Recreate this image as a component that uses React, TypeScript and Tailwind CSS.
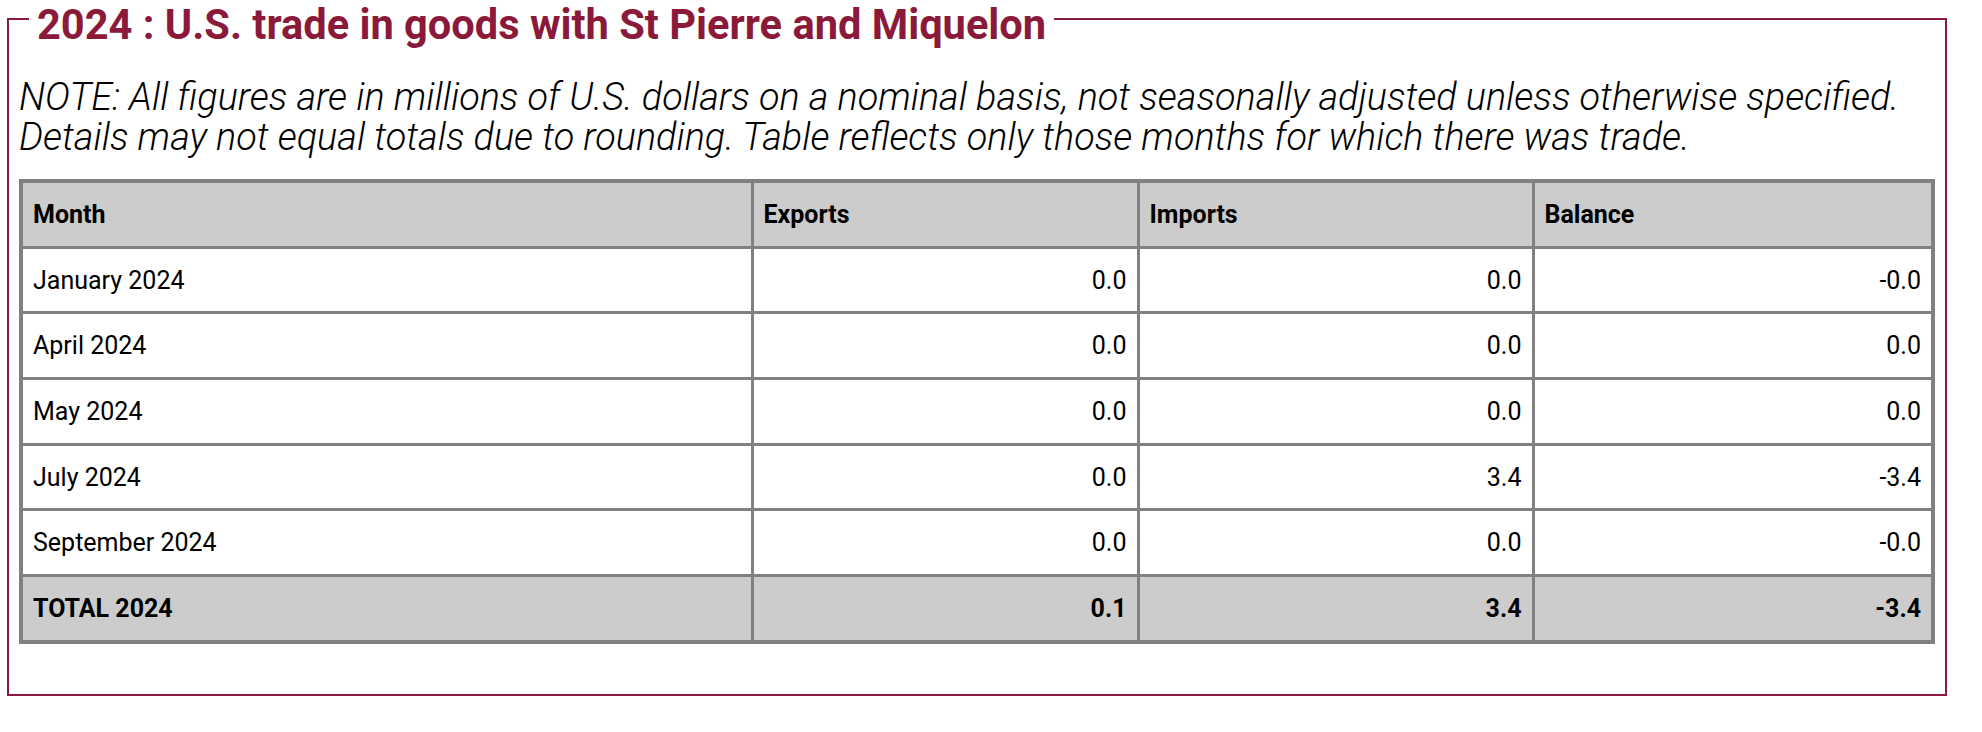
const rows = [
  { month: 'January 2024', exports: '0.0', imports: '0.0', balance: '-0.0' },
  { month: 'April 2024', exports: '0.0', imports: '0.0', balance: '0.0' },
  { month: 'May 2024', exports: '0.0', imports: '0.0', balance: '0.0' },
  { month: 'July 2024', exports: '0.0', imports: '3.4', balance: '-3.4' },
  { month: 'September 2024', exports: '0.0', imports: '0.0', balance: '-0.0' },
]

const cell = 'border-[3px] border-[#808080] px-[10px] py-[16.85px] leading-[29px]'

export default function App() {
  return (
    <div className="min-h-screen bg-white font-['Roboto','Liberation_Sans',sans-serif] text-black">
      <div className="ml-[7px] w-[1940px]">
        {/* legend row: border pieces either side of the title */}
        <div className="flex items-start">
          <div className="mt-[18px] w-[22px] self-stretch border-l-2 border-t-2 border-[#8b1a3a]" />
          <h2 className="px-[8px] text-[41.6px] font-bold leading-[49px] text-[#8b1a3a]">
            2024 : U.S. trade in goods with St Pierre and Miquelon
          </h2>
          <div className="mt-[18px] flex-1 self-stretch border-r-2 border-t-2 border-[#8b1a3a]" />
        </div>

        <div className="border-x-2 border-b-2 border-[#8b1a3a] px-[10px] pb-[50px] pt-[28px]">
          <p className="text-[37.8px] font-light italic leading-[40px]">
            NOTE: All figures are in millions of U.S. dollars on a nominal basis, not seasonally adjusted unless otherwise specified.
            <br />
            Details may not equal totals due to rounding. Table reflects only those months for which there was trade.
          </p>

          <table className="mt-[22px] w-full table-fixed border-collapse border-[4px] border-[#808080] text-[25px]">
            <colgroup>
              <col className="w-[731px]" />
              <col className="w-[386px]" />
              <col className="w-[395px]" />
              <col />
            </colgroup>
            <thead>
              <tr className="bg-[#cccccc] font-bold">
                <th className={`${cell} text-left`}>Month</th>
                <th className={`${cell} text-left`}>Exports</th>
                <th className={`${cell} text-left`}>Imports</th>
                <th className={`${cell} text-left`}>Balance</th>
              </tr>
            </thead>
            <tbody>
              {rows.map(r => (
                <tr key={r.month}>
                  <td className={`${cell} text-left`}>{r.month}</td>
                  <td className={`${cell} text-right`}>{r.exports}</td>
                  <td className={`${cell} text-right`}>{r.imports}</td>
                  <td className={`${cell} text-right`}>{r.balance}</td>
                </tr>
              ))}
              <tr className="bg-[#cccccc] font-bold">
                <td className={`${cell} text-left`}>TOTAL 2024</td>
                <td className={`${cell} text-right`}>0.1</td>
                <td className={`${cell} text-right`}>3.4</td>
                <td className={`${cell} text-right`}>-3.4</td>
              </tr>
            </tbody>
          </table>
        </div>
      </div>
    </div>
  )
}
